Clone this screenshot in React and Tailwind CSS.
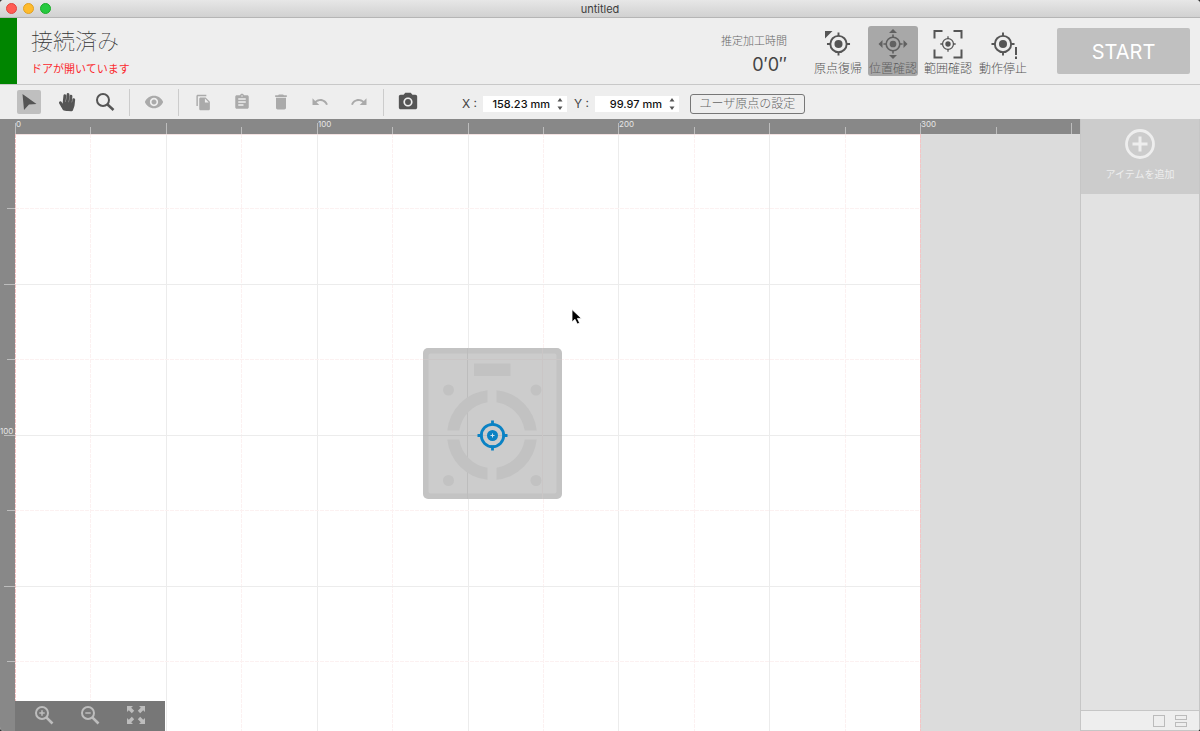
import React from "react";
import {
  MdVisibility,
  MdFileCopy,
  MdAssignment,
  MdDelete,
  MdUndo,
  MdRedo,
  MdPhotoCamera,
} from "react-icons/md";
import { FaHandPaper } from "react-icons/fa";

const MM = 3.017;
const marks = (from, to) => {
  const list = [];
  for (let mm = from; mm <= to; mm += 25) list.push(mm);
  return list;
};

function Target({ cx = 16, cy = 16, s = 1 }) {
  return (
    <g transform={`translate(${cx} ${cy}) scale(${s})`}>
      <circle r="8.5" fill="none" stroke="currentColor" strokeWidth="2" />
      <circle r="4.2" fill="currentColor" />
      <path d="M0-12v4M0 8v4M-12 0h4M8 0h4" stroke="currentColor" strokeWidth="2" />
    </g>
  );
}

function HomeIcon() {
  return (
    <svg className="h-8 w-8" viewBox="0 0 32 32" aria-hidden="true">
      <Target cx={16.5} cy={16} s={0.96} />
      <path d="M3 3h7.500l-7.500 7.500z" fill="currentColor" />
    </svg>
  );
}

function MoveIcon() {
  return (
    <svg className="h-8 w-8" viewBox="0 0 32 32" aria-hidden="true">
      <Target cx={16} cy={16} s={0.8} />
      <path d="M16 1l4 4h-8zM16 31l4-4h-8zM1.500 16l4-4v8zM30.500 16l-4-4v8z" fill="currentColor" />
    </svg>
  );
}

function RangeIcon() {
  return (
    <svg className="h-8 w-8" viewBox="0 0 32 32" aria-hidden="true">
      <Target cx={16} cy={16} s={0.64} />
      <path
        d="M2.500 10.500V3H10.500M21.500 3H29.500V10.500M29.500 21.500V29.500H21.500M10.500 29.500H2.500V21.500"
        fill="none"
        stroke="currentColor"
        strokeWidth="2"
      />
    </svg>
  );
}

function StopIcon() {
  return (
    <svg className="h-8 w-8" viewBox="0 0 32 32" aria-hidden="true">
      <Target cx={16} cy={16} s={0.96} />
      <path d="M29 19v8M29 28.500v2.500" stroke="currentColor" strokeWidth="2" />
    </svg>
  );
}

const machineActions = [
  { label: "原点復帰", Icon: HomeIcon },
  { label: "位置確認", Icon: MoveIcon, active: true },
  { label: "範囲確認", Icon: RangeIcon },
  { label: "動作停止", Icon: StopIcon },
];

function TitleBar() {
  return (
    <div className="relative flex h-[18px] shrink-0 items-center justify-center border-b border-[#b5b5b5] bg-linear-to-b from-[#e7e7e7] to-[#d1d1d1]">
      <div className="absolute inset-y-0 left-[6px] flex items-center gap-[6px]">
        <button aria-label="閉じる" className="h-[11px] w-[11px] rounded-full border border-[#e0443e] bg-[#ff5c54]" />
        <button aria-label="しまう" className="h-[11px] w-[11px] rounded-full border border-[#dfa023] bg-[#febb2c]" />
        <button aria-label="拡大" className="h-[11px] w-[11px] rounded-full border border-[#1aab29] bg-[#26c93f]" />
      </div>
      <h1 className="pt-px text-[11px] leading-4 text-[#3c3c3c]">untitled</h1>
    </div>
  );
}

function Header() {
  return (
    <header className="flex h-[67px] shrink-0 items-center border-b border-[#c8c8c8] bg-[#eeeeee]">
      <div className="w-[17px] self-stretch bg-[#008500]" />
      <div className="ml-[14px] pt-1">
        <p className="text-[22px] leading-7 font-thin text-[#333333]">接続済み</p>
        <p className="mt-1 text-[11px] leading-5 text-[#fb2a2f]">ドアが開いています</p>
      </div>
      <div className="ml-auto pt-2 text-right">
        <p className="text-[11px] leading-4 font-light text-[#666666]">推定加工時間</p>
        <p className="mt-1 text-[18px] leading-6 text-[#444444]">0′0″</p>
      </div>
      <div className="ml-[26px] flex gap-[5px]">
        {machineActions.map(({ label, Icon, active }) => (
          <button
            key={label}
            className={
              active
                ? "flex h-[50px] w-[50px] flex-col items-center justify-between rounded-[3px] bg-[#a8a8a8] pt-[2px] text-[#606060]"
                : "flex h-[50px] w-[50px] flex-col items-center justify-between pt-[2px] text-[#555555]"
            }
          >
            <Icon />
            <span className="text-[12px] leading-[14px] font-light whitespace-nowrap">{label}</span>
          </button>
        ))}
      </div>
      <button className="mr-[10px] ml-[29px] h-[46px] w-[133px] rounded-[2px] bg-[#c0c0c0] pt-px text-[20px] text-white">
        START
      </button>
    </header>
  );
}

function ToolButton({ label, active, children }) {
  return (
    <button
      aria-label={label}
      className={
        active
          ? "flex h-6 w-6 items-center justify-center rounded-[2px] bg-[#bfbfbf]"
          : "flex h-6 w-6 items-center justify-center"
      }
    >
      {children}
    </button>
  );
}

function Divider() {
  return <div className="mx-3 h-[27px] w-px bg-[#cccccc]" />;
}

function Coordinate({ id, label, value }) {
  return (
    <div className="flex items-center">
      <label htmlFor={id} className="w-[21px] text-[12px] leading-4 whitespace-pre text-[#444444]">
        {label} :
      </label>
      <div className="flex h-4 w-[84px] items-center bg-white">
        <input
          id={id}
          defaultValue={value}
          className="w-[67px] bg-transparent text-right text-[11px] leading-4 font-medium text-[#111111] outline-none"
        />
        <svg className="ml-[6px] h-3 w-2" viewBox="0 0 8 12" fill="#555555" aria-hidden="true">
          <path d="M4 0l2.500 3.500h-5zM4 12L6.500 8.500h-5z" />
        </svg>
      </div>
    </div>
  );
}

function Toolbar() {
  return (
    <div className="flex h-[34px] shrink-0 items-center bg-[#eeeeee] pl-[17px] text-[#555555]">
      <div className="flex gap-[14px]">
        <ToolButton label="選択" active>
          <svg className="h-5 w-5" viewBox="0 0 20 20" fill="currentColor" aria-hidden="true">
            <path d="M3.500 2L17.500 12L10 12.500L5 18z" />
          </svg>
        </ToolButton>
        <ToolButton label="手のひら">
          <FaHandPaper className="h-[18px] w-[18px] rotate-6" />
        </ToolButton>
        <ToolButton label="ズーム">
          <svg className="h-5 w-5" viewBox="0 0 20 20" fill="none" stroke="currentColor" aria-hidden="true">
            <circle cx="8" cy="8" r="6" strokeWidth="2" />
            <path d="M12.500 12.500L18.500 18" strokeWidth="2.500" />
          </svg>
        </ToolButton>
      </div>
      <Divider />
      <div className="text-[#aaaaaa]">
        <ToolButton label="プレビュー">
          <MdVisibility className="h-5 w-5" />
        </ToolButton>
      </div>
      <Divider />
      <div className="flex gap-[15px] text-[#aaaaaa]">
        <ToolButton label="コピー">
          <MdFileCopy className="h-[17px] w-[17px]" />
        </ToolButton>
        <ToolButton label="ペースト">
          <MdAssignment className="h-[18px] w-[18px]" />
        </ToolButton>
        <ToolButton label="削除">
          <MdDelete className="h-5 w-5" />
        </ToolButton>
        <ToolButton label="取り消す">
          <MdUndo className="h-[18px] w-[18px]" />
        </ToolButton>
        <ToolButton label="やり直す">
          <MdRedo className="h-[18px] w-[18px]" />
        </ToolButton>
      </div>
      <Divider />
      <ToolButton label="カメラ">
        <MdPhotoCamera className="h-[22px] w-[22px]" />
      </ToolButton>
      <div className="ml-[42px] flex gap-[7px] pt-1">
        <Coordinate id="pos-x" label="X" value="158.23 mm" />
        <Coordinate id="pos-y" label="Y" value="99.97 mm" />
      </div>
      <button className="mt-1 ml-[11px] flex h-5 w-[115px] items-center justify-center rounded-[3px] border border-[#777777] text-[12px] leading-4 font-light text-[#666666]">
        ユーザ原点の設定
      </button>
    </div>
  );
}

function TopRuler() {
  return (
    <svg className="block h-[15px] w-full shrink-0 overflow-hidden bg-[#888888]" aria-hidden="true">
      {marks(0, 350).map((mm) => (
        <g key={mm}>
          <path
            d={`M${Math.round(15 + mm * MM) + 0.5} ${mm % 50 ? 8 : 4}V15`}
            stroke="#bdbdbd"
          />
          {mm % 100 === 0 && (
            <text x={Math.round(15 + mm * MM) + 1} y="8" fontSize="8" fill="#e6e6e6">
              {mm}
            </text>
          )}
        </g>
      ))}
    </svg>
  );
}

function SideRuler() {
  return (
    <svg className="block h-full w-[15px] shrink-0 overflow-hidden bg-[#888888]" aria-hidden="true">
      {marks(25, 175).map((mm) => (
        <g key={mm}>
          <path d={`M${mm % 50 ? 7 : 4} ${Math.round(mm * MM) - 0.5}H15`} stroke="#bdbdbd" />
          {mm % 100 === 0 && (
            <text x="0" y={Math.round(mm * MM) - 2} fontSize="8" fill="#e6e6e6">
              {mm}
            </text>
          )}
        </g>
      ))}
    </svg>
  );
}

function Canvas() {
  return (
    <svg className="absolute inset-0 h-full w-full" aria-hidden="true">
      <rect width="905" height="100%" fill="#ffffff" />
      {marks(25, 275).map((mm) => {
        const x = Math.round(mm * MM) + 0.5;
        return mm % 50 ? (
          <path key={mm} d={`M${x} 0V2000`} stroke="#fcf1f1" strokeDasharray="4 1" />
        ) : (
          <path key={mm} d={`M${x} 0V2000`} stroke="#ececec" />
        );
      })}
      {marks(25, 300).map((mm) => {
        const y = Math.round(mm * MM) - 0.5;
        return mm % 50 ? (
          <path key={mm} d={`M0 ${y}H905`} stroke="#fcf1f1" strokeDasharray="4 1" />
        ) : (
          <path key={mm} d={`M0 ${y}H905`} stroke="#ececec" />
        );
      })}
      <path d="M0 .5H905" stroke="#f3e2e2" />
      <path d="M.5 0V2000M905.500 0V2000" stroke="#f5c4c4" strokeDasharray="4 1" />

      <g transform="translate(408 214)">
        <rect width="139" height="151" rx="5" fill="#c3c3c3" />
        <rect x="5.500" y="5.500" width="128" height="140" rx="2" fill="#cccccc" />
        <path d="M44.500 0V151M0 87.500H139" stroke="#bdbdbd" />
        <path d="M119.500 0V151M0 11.500H139" stroke="#cac6c6" />
        <g fill="#c2c2c2">
          <rect x="51" y="15.500" width="36.500" height="12.500" />
          <circle cx="25.500" cy="42" r="5.500" />
          <circle cx="113" cy="42" r="5.500" />
          <circle cx="25.500" cy="132.500" r="5.500" />
          <circle cx="113" cy="132.500" r="5.500" />
        </g>
        <g fill="#c2c2c2">
          <path d="M64.500 42.200A45 45 0 0 0 24.300 82.500H36.300A33.500 33.500 0 0 1 64.500 54.300z" />
          <path d="M73.500 42.200A45 45 0 0 1 113.700 82.500H101.700A33.500 33.500 0 0 0 73.500 54.300z" />
          <path d="M64.500 131.800A45 45 0 0 1 24.300 91.500H36.300A33.500 33.500 0 0 0 64.500 119.700z" />
          <path d="M73.500 131.800A45 45 0 0 0 113.700 91.500H101.700A33.500 33.500 0 0 1 73.500 119.700z" />
        </g>
        <g transform="translate(69.500 87.500)" fill="none" stroke="#0a82c4">
          <circle r="11.200" strokeWidth="2.800" />
          <path d="M0-15v5M0 10v5M-15 0h5M10 0h5" strokeWidth="2.800" />
          <circle r="5.500" fill="#0a82c4" stroke="none" />
          <path d="M0-2v4M-2 0h4" stroke="#cfe3ee" strokeWidth="1" />
        </g>
      </g>

      <path
        d="M557 175.500v12.500l3-2.700l2.300 4.700l2.300-1.100l-2.200-4.500h4z"
        fill="#000000"
        stroke="#ffffff"
        strokeWidth="0.800"
      />
    </svg>
  );
}

function ZoomBar() {
  return (
    <div className="absolute bottom-0 left-0 flex h-[30px] w-[150px] items-center justify-center gap-[26px] bg-[#777777] pb-[2px] text-[#bdbdbd]">
      <button aria-label="拡大表示">
        <svg className="block h-5 w-5" viewBox="0 0 20 20" fill="none" stroke="currentColor" aria-hidden="true">
          <circle cx="8" cy="8" r="6" strokeWidth="2" />
          <path d="M12.300 12.300L18.500 18.500" strokeWidth="2.600" />
          <path d="M8 5.300v5.400M5.300 8h5.400" strokeWidth="1.500" />
        </svg>
      </button>
      <button aria-label="縮小表示">
        <svg className="block h-5 w-5" viewBox="0 0 20 20" fill="none" stroke="currentColor" aria-hidden="true">
          <circle cx="8" cy="8" r="6" strokeWidth="2" />
          <path d="M12.300 12.300L18.500 18.500" strokeWidth="2.600" />
          <path d="M5.300 8h5.400" strokeWidth="1.500" />
        </svg>
      </button>
      <button aria-label="全体表示">
        <svg className="block h-5 w-5" viewBox="0 0 20 20" fill="currentColor" aria-hidden="true">
          <path d="M1 1h6L5.200 2.800L8.200 5.800L5.800 8.200L2.800 5.200L1 7z" />
          <path d="M19 1h-6L14.800 2.800L11.800 5.800L14.200 8.200L17.200 5.200L19 7z" />
          <path d="M1 19h6L5.200 17.200L8.200 14.200L5.800 11.800L2.800 14.800L1 13z" />
          <path d="M19 19h-6L14.800 17.200L11.800 14.200L14.200 11.800L17.200 14.800L19 13z" />
        </svg>
      </button>
    </div>
  );
}

function ItemPanel() {
  return (
    <aside className="flex w-[120px] shrink-0 flex-col border-x border-[#c6c6c6] bg-[#e2e2e2]">
      <button className="flex h-[75px] flex-col items-center bg-[#cccccc] pt-[9px] text-[#eeeeee]">
        <svg className="h-8 w-8" viewBox="0 0 32 32" fill="none" stroke="currentColor" aria-hidden="true">
          <circle cx="16" cy="16" r="13.500" strokeWidth="2.800" />
          <path d="M16 8.500v15M8.500 16h15" strokeWidth="3" />
        </svg>
        <span className="mt-1.5 text-[10px] leading-4">アイテムを追加</span>
      </button>
      <div className="mt-auto flex h-[21px] items-center justify-end gap-2 border-y border-[#c6c6c6] bg-[#eeeeee] pr-[11px] text-[#bbbbbb]">
        <button aria-label="一列表示">
          <svg className="block h-[14px] w-[14px]" viewBox="0 0 14 14" fill="none" stroke="currentColor" aria-hidden="true">
            <rect x="1.500" y="1.500" width="11" height="11" />
          </svg>
        </button>
        <button aria-label="リスト表示">
          <svg className="block h-[14px] w-[14px]" viewBox="0 0 14 14" fill="none" stroke="currentColor" aria-hidden="true">
            <rect x="1.500" y="1.500" width="11" height="4" />
            <rect x="1.500" y="8.500" width="11" height="4" />
          </svg>
        </button>
      </div>
    </aside>
  );
}

export default function App() {
  return (
    <div className="h-screen bg-[#333333] font-['Inter','Noto_Sans_CJK_JP',sans-serif]">
      <div className="flex h-full flex-col overflow-hidden rounded-[4px] bg-[#eeeeee]">
        <TitleBar />
        <Header />
        <Toolbar />
        <main className="flex min-h-0 flex-1">
          <section className="flex min-w-0 flex-1 flex-col">
            <TopRuler />
            <div className="flex min-h-0 flex-1">
              <SideRuler />
              <div className="relative min-w-0 flex-1 bg-[#dcdcdc]">
                <Canvas />
                <ZoomBar />
              </div>
            </div>
          </section>
          <ItemPanel />
        </main>
      </div>
    </div>
  );
}
